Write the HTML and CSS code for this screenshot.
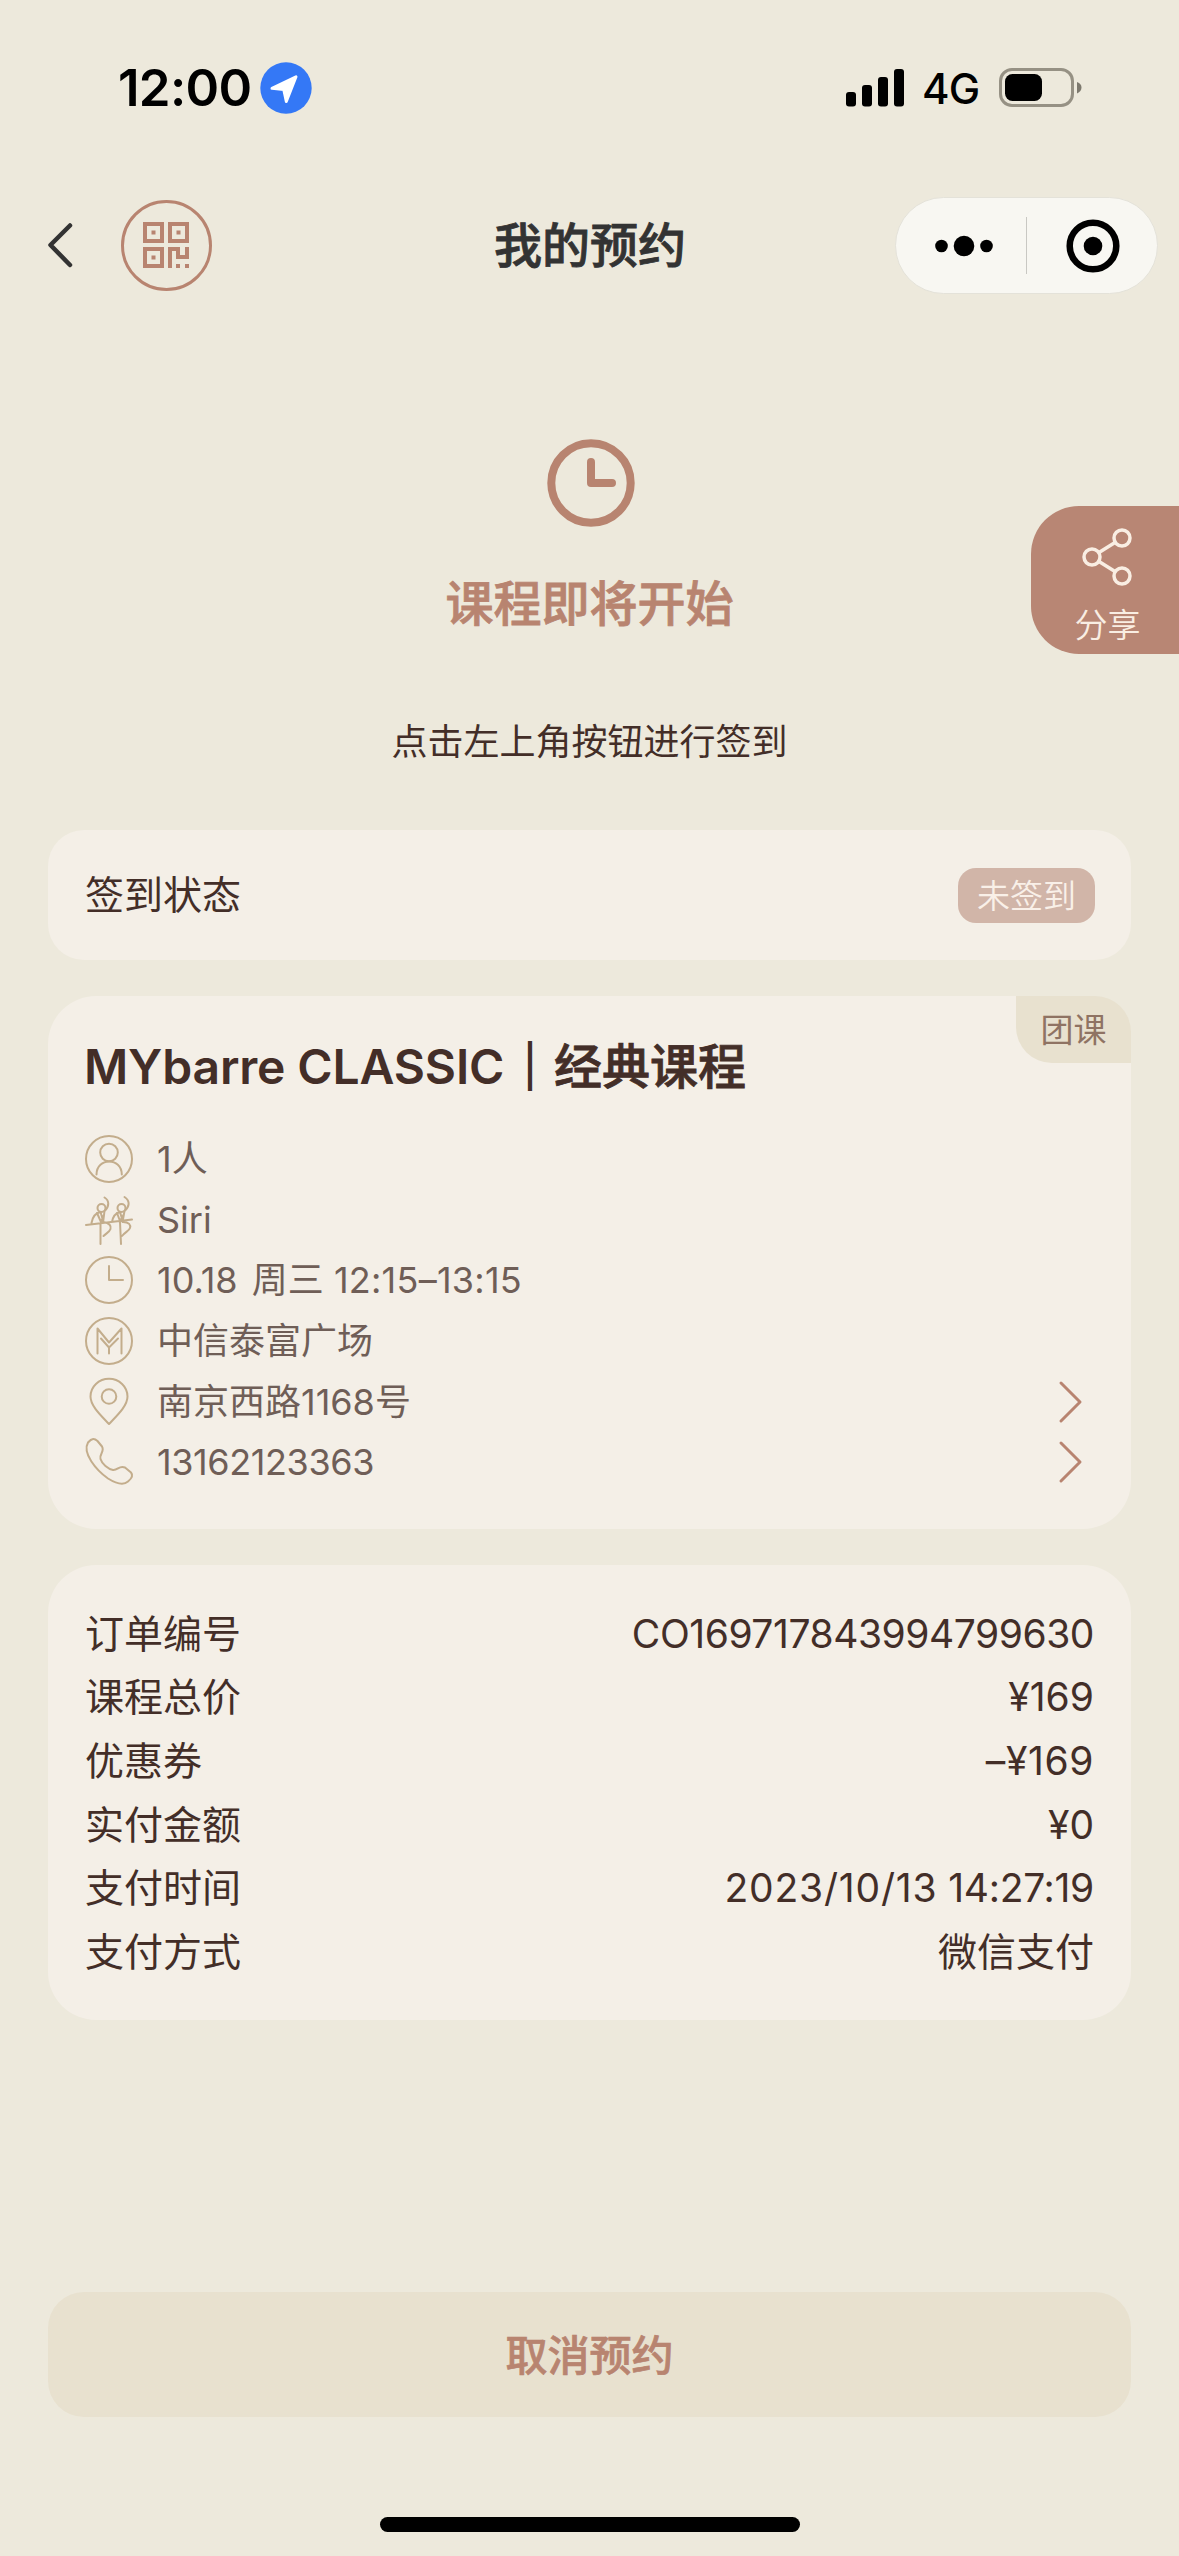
FILE: index.html
```html
<!DOCTYPE html>
<html lang="zh-CN">
<head>
<meta charset="utf-8">
<title>我的预约</title>
<link rel="stylesheet" href="styles.css">
</head>
<body>
<div class="screen">
  <header class="status-bar">
    <span class="time">12:00</span>
    <svg class="location" viewBox="0 0 52 52"><circle cx="26" cy="26" r="25.7" fill="#3478f6"/><path d="M36 14.8 26.3 39.5 23.8 27.6 12 26.3Z" fill="#fff" stroke="#fff" stroke-width="3" stroke-linejoin="round"/></svg>
    <svg class="signal" viewBox="0 0 58 38"><rect y="23" width="10" height="14.500" rx="3"/><rect x="16" y="16" width="10" height="21.500" rx="3"/><rect x="32" y="8" width="10" height="29.500" rx="3"/><rect x="48" width="10" height="37.500" rx="3"/></svg>
    <span class="network">4G</span>
    <svg class="battery" viewBox="0 0 83 40"><rect x="1.500" y="1.500" width="72" height="36" rx="11.500" fill="none" stroke="#969184" stroke-width="3"/><rect x="6" y="6" width="37" height="27" rx="7.500"/><path d="M78 14c6 2 6 9 0 11.500z" fill="#7d796e"/></svg>
  </header>

  <nav class="nav-bar">
    <svg class="back" viewBox="0 0 26 44"><path d="M23 1.500 3.500 21 23 41" fill="none" stroke="#333" stroke-width="4.500" stroke-linecap="round" stroke-linejoin="round"/></svg>
    <button class="qr-button" type="button">
      <svg viewBox="0 0 46 46" fill="none" stroke="#b88470" stroke-width="4"><path d="M2 2h17v17H2zM27 2h17v17H27zM2 27h17v17H2zM27 46V27h8v8h9V25"/><path d="M8.500 10.500h4M33.500 10.500h4M8.500 35.500h4M33 44h4M42 44h4"/></svg>
    </button>
    <h1 class="nav-title">我的预约</h1>
    <div class="capsule">
      <svg class="more" viewBox="0 0 58 22"><circle cx="6.500" cy="11" r="6.300"/><circle cx="29" cy="11" r="10.300"/><circle cx="51.500" cy="11" r="6.300"/></svg>
      <span class="capsule-divider"></span>
      <svg class="target" viewBox="0 0 54 54"><circle cx="27" cy="27" r="23.300" fill="none" stroke="#000" stroke-width="6.500"/><circle cx="27" cy="27" r="9.300"/></svg>
    </div>
  </nav>

  <section class="hero">
    <svg class="hero-clock" viewBox="0 0 88 88" fill="none" stroke="#b88470" stroke-width="8" stroke-linecap="round" stroke-linejoin="round"><circle cx="44" cy="44" r="39.700"/><path d="M44 23V44H65"/></svg>
    <h2 class="hero-title">课程即将开始</h2>
    <p class="hero-hint">点击左上角按钮进行签到</p>
    <button class="share" type="button">
      <svg class="share-icon" viewBox="0 0 52 60" fill="none" stroke="#f9eee3" stroke-width="3.500"><circle cx="11" cy="30" r="8"/><circle cx="41" cy="11" r="8"/><circle cx="41" cy="49" r="8"/><path d="m18 25.500 16-10M18 34.500l16 10"/></svg>
      <span>分享</span>
    </button>
  </section>

  <main class="cards">
    <section class="card check-card">
      <span>签到状态</span>
      <span class="check-badge">未签到</span>
    </section>

    <section class="card course-card">
      <span class="course-type">团课</span>
      <h3 class="course-title"><span class="course-name">MYbarre CLASSIC</span><span class="course-bar">｜</span>经典课程</h3>
      <ul class="details">
        <li><svg viewBox="0 0 48 48"><circle cx="24" cy="24" r="23"/><circle cx="24" cy="17.500" r="8.800"/><path d="M11.500 39.500C11.500 22 36.800 22 36.800 39.500"/></svg><span>1人</span></li>
        <li><svg viewBox="0 0 48 48"><path d="M1 29 47 23.500M19.500 1.500c5 3 5 9 0 13.500l-1.500 12M39.500 1c6 4 5 10 0 14l-2 11M6.500 27c1-6 4-10 9-11l3 10c6 1 8 4 7 7-1 3-4 4-7 7M15.500 28v20M27 26c1-6 4-9 8-10l3 10c6 0 8 3 7 6-1 3-5 4-8 8M35 26l1 22M12 17l4 9 3-7M32 17l3 8 4-7"/><circle cx="16.500" cy="12" r="4"/><circle cx="36.500" cy="12" r="4"/></svg><span>Siri</span></li>
        <li><svg viewBox="0 0 48 48"><circle cx="24" cy="24" r="23"/><path d="M24 10V24H38"/></svg><span><span class="date">10.18</span> 周三 <span class="hours">12:15–13:15</span></span></li>
        <li><svg viewBox="0 0 48 48"><circle cx="24" cy="24" r="23"/><path d="M12.500 36.500V11.500L24 25.500 36.500 11.500V36.500M16 21.500 24 30.500 33 21.500M24 30.500V36.500"/></svg><span>中信泰富广场</span></li>
        <li><svg viewBox="0 0 48 48"><path d="M24 46C16 37.500 5.500 28 5.500 18.500a18.500 17.800 0 0 1 37 0C42.500 28 32 37.500 24 46Z"/><circle cx="24" cy="18.500" r="7.300"/></svg><span>南京西路1168号</span><svg class="chevron" viewBox="0 0 24 42"><path d="m2 2 19 19-19 19"/></svg></li>
        <li><svg viewBox="0 0 48 48"><path d="M3 4.500C7-.3 9.500.2 12.500 3L17 8.500C20 13.500 14 16 15.500 21C17 26 23 31 28 32C33 32.500 34 27 40 29.500L46 34.500C48.500 37.500 46 41 43 43.500C38 48 31 45.500 23 40.500C11 32-3 15 3 4.500Z"/></svg><span class="phone">13162123363</span><svg class="chevron" viewBox="0 0 24 42"><path d="m2 2 19 19-19 19"/></svg></li>
      </ul>
    </section>

    <dl class="card order-card">
      <div><dt>订单编号</dt><dd class="order-number">CO169717843994799630</dd></div>
      <div><dt>课程总价</dt><dd>¥169</dd></div>
      <div><dt>优惠券</dt><dd class="discount">–¥169</dd></div>
      <div><dt>实付金额</dt><dd>¥0</dd></div>
      <div><dt>支付时间</dt><dd><span class="paid-date">2023/10/13</span> <span class="paid-time">14:27:19</span></dd></div>
      <div><dt>支付方式</dt><dd>微信支付</dd></div>
    </dl>
  </main>

  <button class="cancel" type="button">取消预约</button>
  <div class="home-indicator"></div>
</div>
</body>
</html>
```
FILE: styles.css
```css
* { box-sizing: border-box; margin: 0; padding: 0; }

body {
  background: #ede9dc;
  color: #432e28;
  font-family: Inter, "Noto Sans CJK SC", sans-serif;
}

button { border: 0; font: inherit; }
ul { list-style: none; }
svg { display: block; flex: none; overflow: visible; }

.screen {
  position: relative;
  display: flex;
  flex-direction: column;
  width: 1179px;
  height: 2556px;
  overflow: hidden;
}

/* Status bar */
.status-bar {
  display: flex;
  align-items: center;
  height: 176px;
  padding: 0 97px 0 118px;
  color: #000;
}
.time { width: 142px; font-size: 51px; font-weight: 600; line-height: 60px; letter-spacing: -0.7px; }
.location { width: 52px; height: 52px; }
.signal { width: 58px; height: 38px; margin-left: auto; }
.network { width: 77px; margin: 2px 0 0 18px; font-size: 42px; font-weight: 500; line-height: 50px; letter-spacing: -0.7px; }
.battery { width: 83px; height: 40px; }

/* Navigation bar */
.nav-bar {
  position: relative;
  display: flex;
  align-items: center;
  height: 139px;
  padding: 0 21px 0 47px;
}
.back { width: 26px; height: 44px; }
.qr-button {
  display: grid;
  place-items: center;
  width: 91px;
  height: 91px;
  margin-left: 48px;
  padding: 0 1px 1px 0;
  border: 3px solid #b88470;
  border-radius: 50%;
  background: none;
}
.qr-button svg { width: 46px; height: 46px; }
.nav-title {
  margin-left: 282px;
  color: #333;
  font-size: 48px;
  font-weight: 500;
  line-height: 64px;
  -webkit-text-stroke: 0.8px currentColor;
}
.capsule {
  display: flex;
  align-items: center;
  width: 263px;
  height: 97px;
  margin-left: auto;
  padding: 0 37px 0 39px;
  border: 1px solid #e4e2d9;
  border-radius: 49px;
  background: #f8f7f2;
}
.more { width: 58px; height: 22px; }
.capsule-divider { width: 1px; height: 57px; margin: 0 39px 0 33px; background: #c9c8c3; }
.target { width: 54px; height: 54px; }

/* Hero */
.hero {
  position: relative;
  display: flex;
  flex-direction: column;
  align-items: center;
  height: 515px;
  padding-top: 124px;
}
.hero-clock { width: 88px; height: 88px; margin-left: 2px; }
.hero-title {
  margin-top: 45px;
  color: #b88470;
  font-size: 48px;
  font-weight: 500;
  line-height: 64px;
  -webkit-text-stroke: 0.8px currentColor;
}
.hero-hint { margin-top: 81px; font-size: 36px; line-height: 50px; }
.share {
  position: absolute;
  top: 191px;
  right: 0;
  display: flex;
  flex-direction: column;
  align-items: center;
  width: 148px;
  height: 148px;
  padding: 21px 0 0 5px;
  border-radius: 48px 0 0 48px;
  background: #b88674;
  color: #f9eee3;
  font-size: 33px;
  font-weight: 350;
  line-height: 40px;
}
.share-icon { width: 52px; height: 60px; margin: 0 2px 18px 0; }

/* Cards */
.cards { display: flex; flex-direction: column; gap: 36px; padding: 0 48px; }
.card { border-radius: 48px; background: #f4efe7; }
.check-card {
  display: flex;
  align-items: center;
  justify-content: space-between;
  height: 130px;
  padding: 0 36px 0 37px;
  border-radius: 36px;
  font-size: 39px;
  line-height: 56px;
}
.check-badge {
  width: 137px;
  height: 55px;
  border-radius: 18px;
  background: #d1b5a8;
  color: #f9f0e8;
  font-size: 33px;
  font-weight: 350;
  line-height: 57px;
  text-align: center;
}

.course-card { position: relative; height: 533px; padding: 39px 36px 0; }
.course-type {
  position: absolute;
  top: 0;
  right: 0;
  width: 115px;
  height: 67px;
  border-radius: 0 36px 0 36px;
  background: #e8e1cf;
  color: #8f7363;
  font-size: 33px;
  line-height: 68px;
  text-align: center;
}
.course-title {
  display: flex;
  font-size: 48px;
  font-weight: 500;
  line-height: 64px;
  -webkit-text-stroke: 0.8px currentColor;
}
.course-name {
  width: 422px;
  font-weight: 600;
  letter-spacing: -0.15px;
  white-space: nowrap;
  -webkit-text-stroke: 0;
}
.course-bar { -webkit-text-stroke: 2px currentColor; }
.details { padding: 30px 0 0 1px; color: #6f5e57; font-size: 36px; line-height: 50px; }
.details li { display: flex; align-items: center; height: 60.600px; padding-right: 12px; }
.details li > svg {
  width: 48px;
  height: 48px;
  margin-right: 24px;
  fill: none;
  stroke: #c3ad8c;
  stroke-width: 2;
  stroke-linecap: round;
  stroke-linejoin: round;
}
.details li > .chevron { width: 24px; height: 42px; margin: 0 0 0 auto; stroke: #b88470; stroke-width: 3; }
.date { margin-right: 4px; }
.hours { letter-spacing: 0.25px; }
.phone { letter-spacing: -0.4px; }

.order-card { height: 455px; padding: 37px 37px 0 37px; font-size: 39px; line-height: 56px; }
.order-card div { display: flex; align-items: center; justify-content: space-between; height: 63.600px; }
.order-number { letter-spacing: -0.45px; }
.discount { letter-spacing: 0.6px; }
.paid-date { letter-spacing: 0.8px; }
.paid-time { letter-spacing: -0.3px; }

/* Footer */
.cancel {
  width: 1083px;
  height: 125px;
  margin: 272px auto 0;
  padding-top: 2px;
  border-radius: 36px;
  background: #e8e1cf;
  color: #b88470;
  font-size: 42px;
  font-weight: 500;
  line-height: 60px;
  -webkit-text-stroke: 0.7px currentColor;
}
.home-indicator { width: 420px; height: 15px; margin: 100px auto 0; border-radius: 8px; background: #000; }
```
